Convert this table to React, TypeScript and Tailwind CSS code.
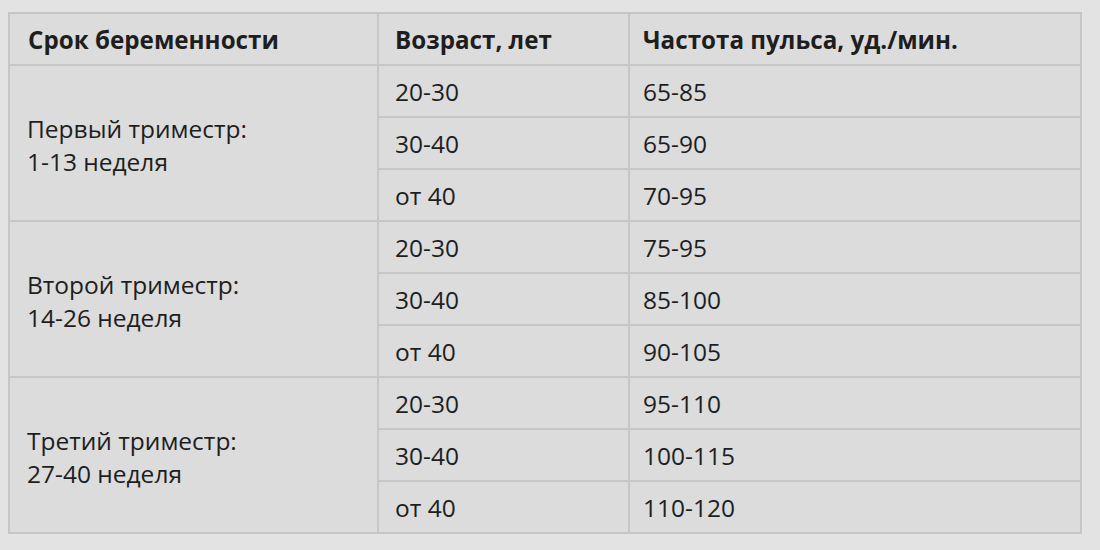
import React from "react";

type Group = { name: string; weeks: string; rows: [string, string][] };

const groups: Group[] = [
  {
    name: "Первый триместр:",
    weeks: "1-13 неделя",
    rows: [
      ["20-30", "65-85"],
      ["30-40", "65-90"],
      ["от 40", "70-95"],
    ],
  },
  {
    name: "Второй триместр:",
    weeks: "14-26 неделя",
    rows: [
      ["20-30", "75-95"],
      ["30-40", "85-100"],
      ["от 40", "90-105"],
    ],
  },
  {
    name: "Третий триместр:",
    weeks: "27-40 неделя",
    rows: [
      ["20-30", "95-110"],
      ["30-40", "100-115"],
      ["от 40", "110-120"],
    ],
  },
];

const cell = "border-2 border-[#c6c6c6] h-[52px] px-[16px] align-middle";

export default function App() {
  return (
    <div
      className="w-[1100px] h-[550px] bg-[#e3e3e3] pt-[12px] pl-[8px] text-[#1e1e1e]"
      style={{ fontFamily: '"Open Sans", "DejaVu Sans", sans-serif' }}
    >
      <table className="border-collapse w-[1074px] bg-[#dcdcdc] text-[24.5px] leading-[33px] border-2 border-[#bdbdbd]">
        <thead>
          <tr>
            <th className={`${cell} w-[369px] text-left font-bold text-[24.2px] pl-[18px]`}>
              Срок беременности
            </th>
            <th className={`${cell} w-[251px] text-left font-bold text-[24.2px] pl-[16px]`}>
              Возраст, лет
            </th>
            <th className={`${cell} text-left font-bold text-[24.2px] pl-[13px]`}>
              Частота пульса, уд./мин.
            </th>
          </tr>
        </thead>
        <tbody>
          {groups.map((g) =>
            g.rows.map(([age, pulse], i) => (
              <tr key={g.name + i}>
                {i === 0 && (
                  <td rowSpan={3} className={`${cell} pl-[17px] pt-[4px]`}>
                    <div>{g.name}</div>
                    <div>{g.weeks}</div>
                  </td>
                )}
                <td className={`${cell} pl-[16px]`}>{age}</td>
                <td className={`${cell} pl-[13px]`}>{pulse}</td>
              </tr>
            ))
          )}
        </tbody>
      </table>
    </div>
  );
}
